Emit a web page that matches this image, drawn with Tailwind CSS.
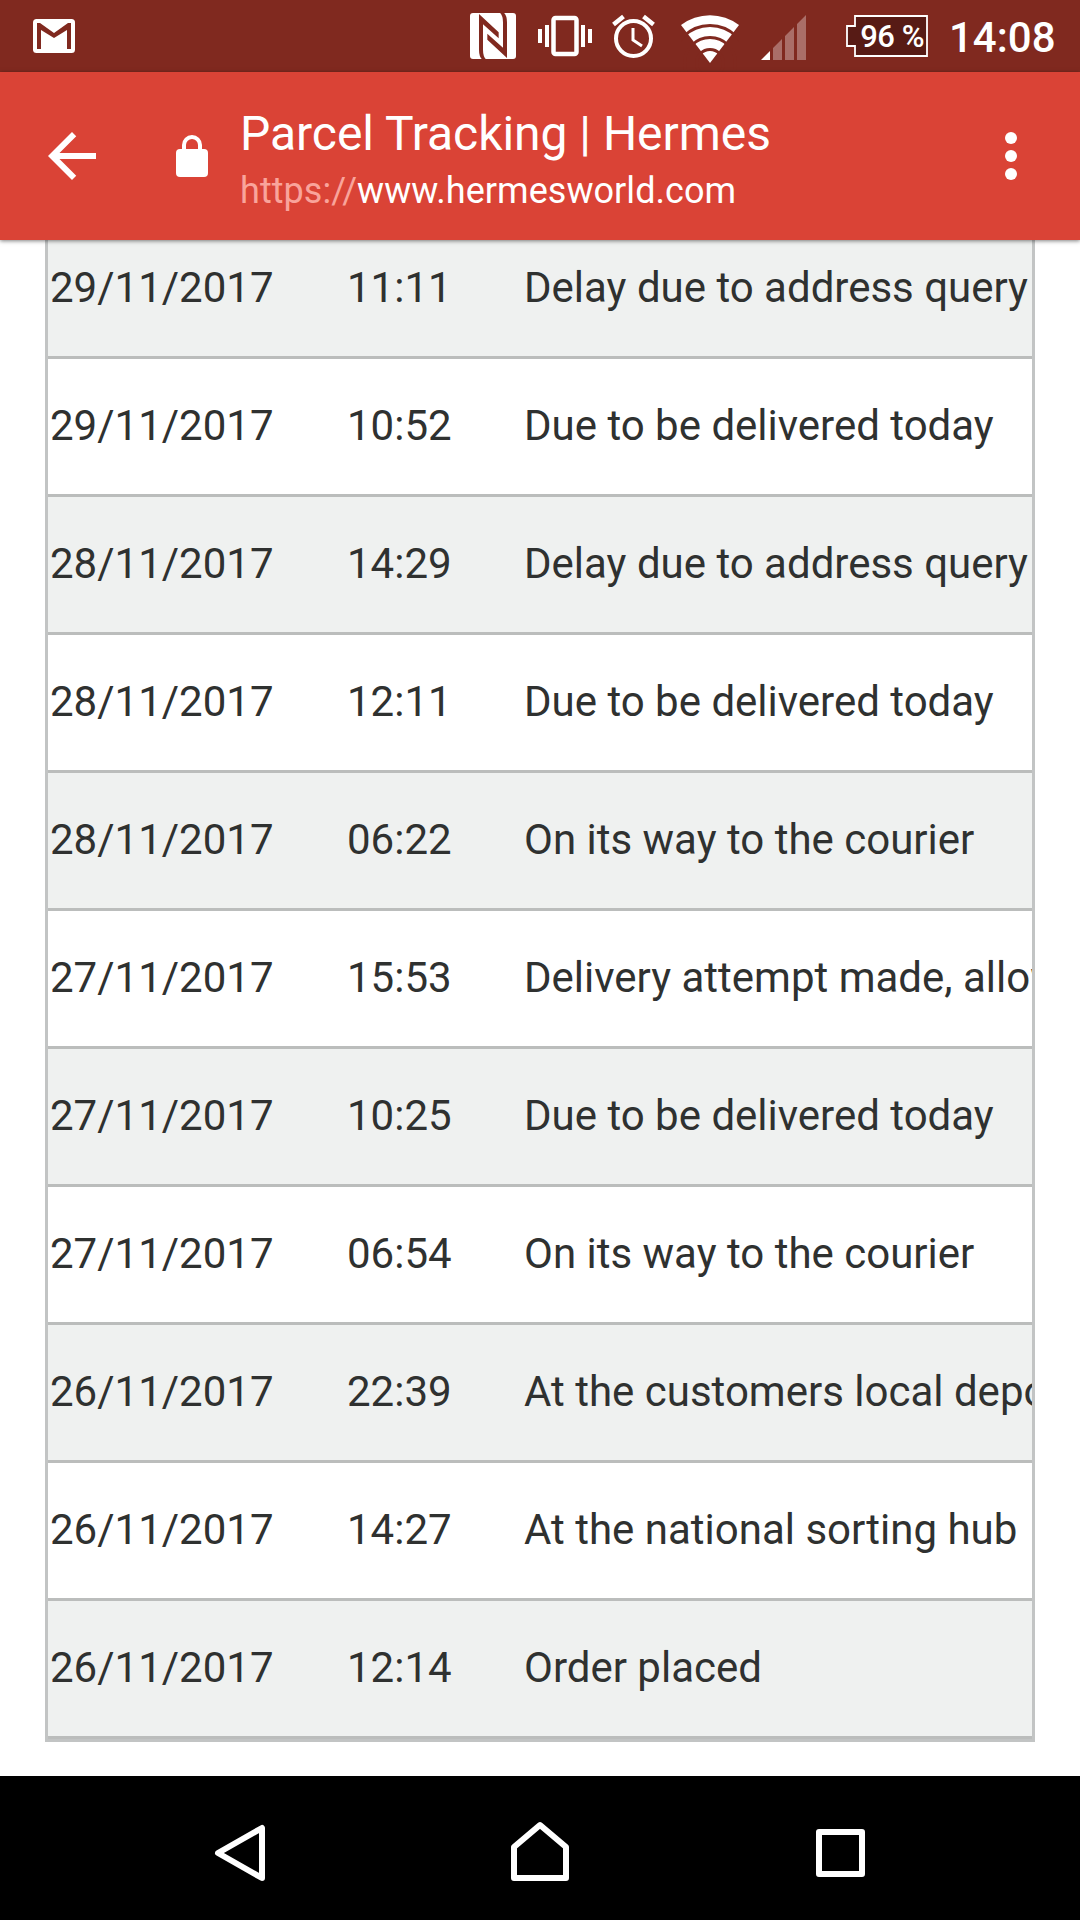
<!DOCTYPE html>
<html lang="en">
<head>
<meta charset="utf-8">
<title>Parcel Tracking | Hermes</title>
<script src="https://cdn.jsdelivr.net/npm/@tailwindcss/browser@4"></script>
</head>
<body class="w-[1080px] h-[1920px] overflow-hidden bg-white flex flex-col font-['Roboto',sans-serif] text-[#2f3130]">
<div class="h-[72px] shrink-0 bg-[#80291f] flex items-center text-white">
  <svg class="ml-[33px] w-[42px] h-[72px]" viewBox="33 0 42 72"><rect x="33" y="19" width="42" height="34" rx="3.5" fill="#fff"/><path d="M37 49V23h3l14 10 14-10h3v26h-4V30L54 38 41 30v19z" fill="#80291f"/></svg>
  <svg class="ml-[395px] w-[46px] h-[72px]" viewBox="470 0 46 72"><rect x="470" y="13" width="46" height="46" rx="3" fill="#fff"/><g transform="translate(465 8) scale(.3333)" fill="#80291f"><path d="M42 18L101 73V91L54 49V125Q54 145 63 154H51Q42 145 42 125Z"/><path d="M126 150L67 95V77L114 119V43Q114 23 105 14H117Q126 23 126 43Z"/></g></svg>
  <svg class="ml-[22px] w-[54px] h-[72px]" viewBox="538 0 54 72" fill="#fff"><path d="M538 29h4v14h-4zM545 25h4v22h-4zM581 25h4v22h-4zM588 29h4v14h-4z"/><rect x="553.5" y="18" width="23" height="36" rx="2" fill="none" stroke="#fff" stroke-width="4.5"/></svg>
  <svg class="ml-[20px] w-[43px] h-[72px]" viewBox="612 0 43 72" fill="none" stroke="#fff"><circle cx="633.500" cy="38.500" r="17.500" stroke-width="4"/><path d="M633 28v12l9 6" stroke-width="3"/><path d="M613.500 24.500l10-8M653.500 24.500l-10-8" stroke-width="4.500"/></svg>
  <svg class="ml-[26px] w-[58px] h-[72px]" viewBox="681 0 58 72"><path d="M710 63L681 25A48 48 0 0 1 739 25z" fill="#fff"/><g fill="none" stroke="#80291f" stroke-width="3"><circle cx="710" cy="63" r="37.500"/><circle cx="710" cy="63" r="25.500"/><circle cx="710" cy="63" r="13.500"/></g></svg>
  <svg class="ml-[22px] w-[46px] h-[72px]" viewBox="761 0 46 72"><path d="M761 60l9-9v9z" fill="#fff"/><path d="M773 60V48l9-9v21zM785 60V36l9-9v33zM797 60V24l9-9v45z" fill="#aa6e68"/></svg>
  <div class="ml-[39px] w-[82px] h-[42px] relative flex items-center justify-end pr-1">
    <svg class="absolute inset-0 w-[82px] h-[42px]" viewBox="0 0 82 42"><path d="M9 1h72v40H9V31H1V11h8z" fill="#571b15" stroke="#fff" stroke-width="1.800"/></svg>
    <span class="relative text-[31px] leading-none font-medium tracking-[-0.5px] whitespace-nowrap">96 %</span>
  </div>
  <span class="ml-[21px] pt-[3px] text-[42px] leading-[69px] font-medium">14:08</span>
</div>
<header class="h-[168px] shrink-0 bg-[#da4336] flex items-center text-white relative z-10 shadow-[0_1px_4px_rgba(0,0,0,0.5)]">
  <svg class="ml-[48px] w-[48px] h-[48px]" viewBox="4 4 16 16" fill="#fff"><path d="M20 11H7.830l5.590-5.590L12 4l-8 8 8 8 1.410-1.410L7.830 13H20v-2z"/></svg>
  <svg class="ml-[80px] w-[32px] h-[42px]" viewBox="0 0 32 42"><rect y="14" width="32" height="28" rx="4" fill="#fff"/><path d="M8 16v-6a8 8 0 0 1 16 0v6" fill="none" stroke="#fff" stroke-width="4"/></svg>
  <div class="ml-[32px] flex-1 pt-[8px]">
    <div class="text-[48px] leading-[60px] tracking-[-0.04px]">Parcel Tracking | Hermes</div>
    <div class="text-[36px] leading-[52px] tracking-[0.05px] pt-px -mb-px"><span class="text-[#f9a49b]">https://</span>www.hermesworld.com</div>
  </div>
  <svg class="mr-[63px] w-[12px] h-[48px]" viewBox="0 0 12 48" fill="#fff"><circle cx="6" cy="6" r="6"/><circle cx="6" cy="24" r="6"/><circle cx="6" cy="42" r="6"/></svg>
</header>
<main class="flex-1 min-h-0 overflow-hidden">
  <div id="rows" class="mx-[45px] border-x-3 border-b-3 border-[#c2c4c4] text-[42px] leading-[48px] overflow-hidden"></div>
</main>
<nav class="h-[144px] shrink-0 bg-black flex items-center">
  <svg class="w-full h-[144px]" viewBox="0 1776 1080 144" fill="none" stroke="#fff" stroke-width="6" stroke-linejoin="round"><path d="M262 1828v50l-44-25z"/><path d="M514 1878v-31l26-22 26 22v31z"/><rect x="819" y="1832" width="43" height="42"/></svg>
</nav>
<script>
const data = [
["29/11/2017","11:11","Delay due to address query"],
["29/11/2017","10:52","Due to be delivered today"],
["28/11/2017","14:29","Delay due to address query"],
["28/11/2017","12:11","Due to be delivered today"],
["28/11/2017","06:22","On its way to the courier"],
["27/11/2017","15:53","Delivery attempt made, allowing"],
["27/11/2017","10:25","Due to be delivered today"],
["27/11/2017","06:54","On its way to the courier"],
["26/11/2017","22:39","At the customers local depot"],
["26/11/2017","14:27","At the national sorting hub"],
["26/11/2017","12:14","Order placed"]];
document.getElementById("rows").innerHTML = data.map(([d,t,s],i)=>
`<div class="${i?'h-[138px] pt-[43px]':'h-[119px] pt-[24px]'} border-b-3 border-[#bbbdbc] ${i%2?'bg-white':'bg-[#eff1f0]'} flex whitespace-nowrap overflow-hidden"><span class="w-[298px] shrink-0 pl-[2px]">${d}</span><span class="w-[178px] shrink-0 pl-[1px]">${t}</span><span class="shrink-0">${s}</span></div>`).join("");
</script>
</body>
</html>
